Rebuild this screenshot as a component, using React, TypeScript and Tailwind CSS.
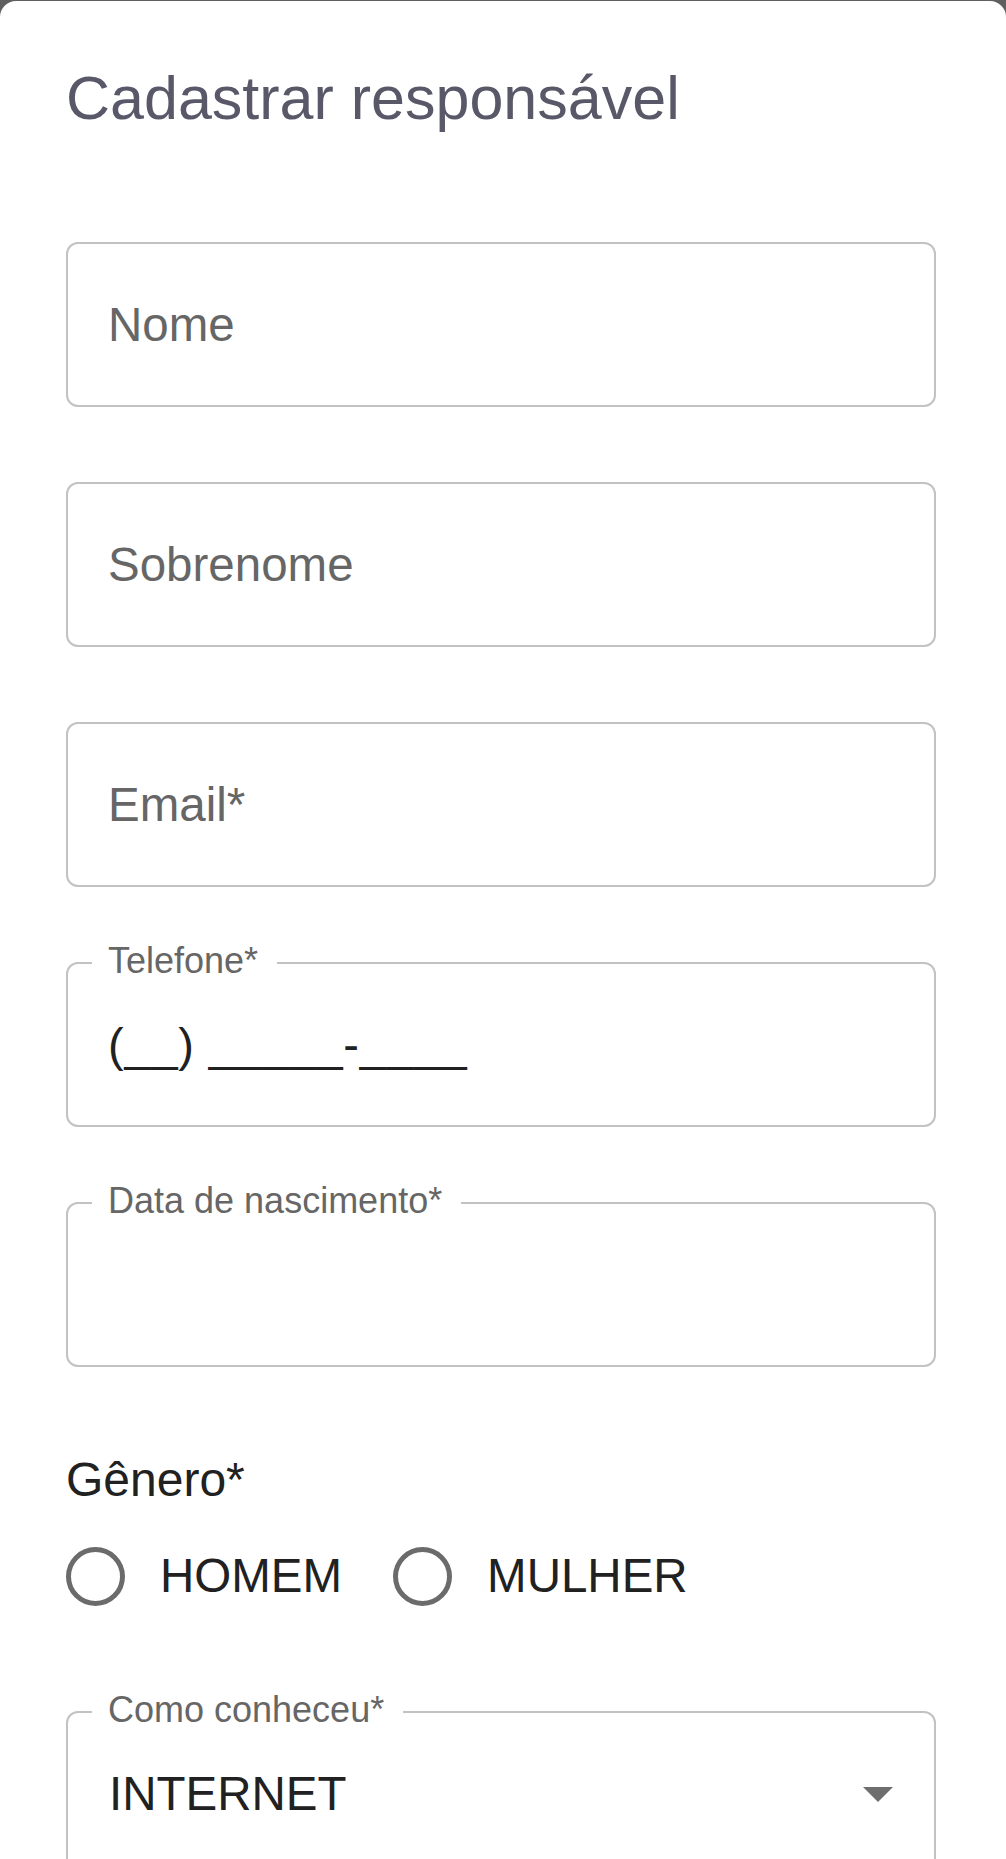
import React from 'react';

const fields = [
	{ id: 'nome', label: 'Nome' },
	{ id: 'sobrenome', label: 'Sobrenome' },
	{ id: 'email', label: 'Email*' },
	{ id: 'telefone', label: 'Telefone*', value: '(__) _____-____', shrink: true },
	{ id: 'nascimento', label: 'Data de nascimento*', value: '', shrink: true },
];

const generos = ['HOMEM', 'MULHER'];

const FloatingLabel = ({ text }) => (
	<span className="absolute left-[24px] top-[-21px] bg-white pl-[16px] pr-[19px] text-[36px] leading-none text-[#666666]">
		{text}
	</span>
);

const OutlinedField = ({ label, value, shrink }) => {
	return (
		<div className="relative flex h-[165px] items-center rounded-[12px] border-2 border-[#c2c2c2] pl-[40px]">
			{shrink && <FloatingLabel text={label} />}
			{shrink ? (
				<span className="text-[47px] leading-none tracking-[0.8px] text-[#212121]">{value}</span>
			) : (
				<span className="text-[47.5px] leading-none text-[#666666]">{label}</span>
			)}
		</div>
	);
};

const RadioOption = ({ label }) => (
	<label className="flex items-center gap-[35px]">
		<span className="h-[59px] w-[59px] rounded-full border-[5.5px] border-[#6b6b6b]" />
		<span className="text-[47.5px] leading-none text-[#212121]">{label}</span>
	</label>
);

const ComoConheceu = () => (
	<div className="relative flex h-[165px] items-center justify-between rounded-[12px] border-2 border-[#c2c2c2] pl-[41px] pr-[41px]">
		<FloatingLabel text="Como conheceu*" />
		<span className="text-[47.5px] leading-none text-[#212121]">INTERNET</span>
		<svg width="30" height="15" viewBox="0 0 30 15" className="mt-[2px]">
			<polygon points="0,0 30,0 15,15" fill="#6e6e6e" />
		</svg>
	</div>
);

export default function App() {
	return (
		<div className="h-[1859px] overflow-hidden bg-[#5f5f5f] pt-px font-['Liberation_Sans',Arial,sans-serif]">
			<div className="h-full rounded-t-[16px] bg-white pl-[66px] pr-[70px] pt-[67px]">
				<h1 className="text-[61px] font-normal leading-none text-[#585869]">Cadastrar responsável</h1>

				<div className="mt-[113px] flex flex-col gap-[75px]">
					{fields.map((field) => (
						<OutlinedField key={field.id} label={field.label} value={field.value} shrink={field.shrink} />
					))}
				</div>

				<div className="mt-[89px] text-[48px] leading-none text-[#212121]">Gênero*</div>
				<div className="mt-[37px] flex h-[70px] items-center gap-[51px]">
					{generos.map((g) => (
						<RadioOption key={g} label={g} />
					))}
				</div>

				<div className="mt-[100px]">
					<ComoConheceu />
				</div>
			</div>
		</div>
	);
}
